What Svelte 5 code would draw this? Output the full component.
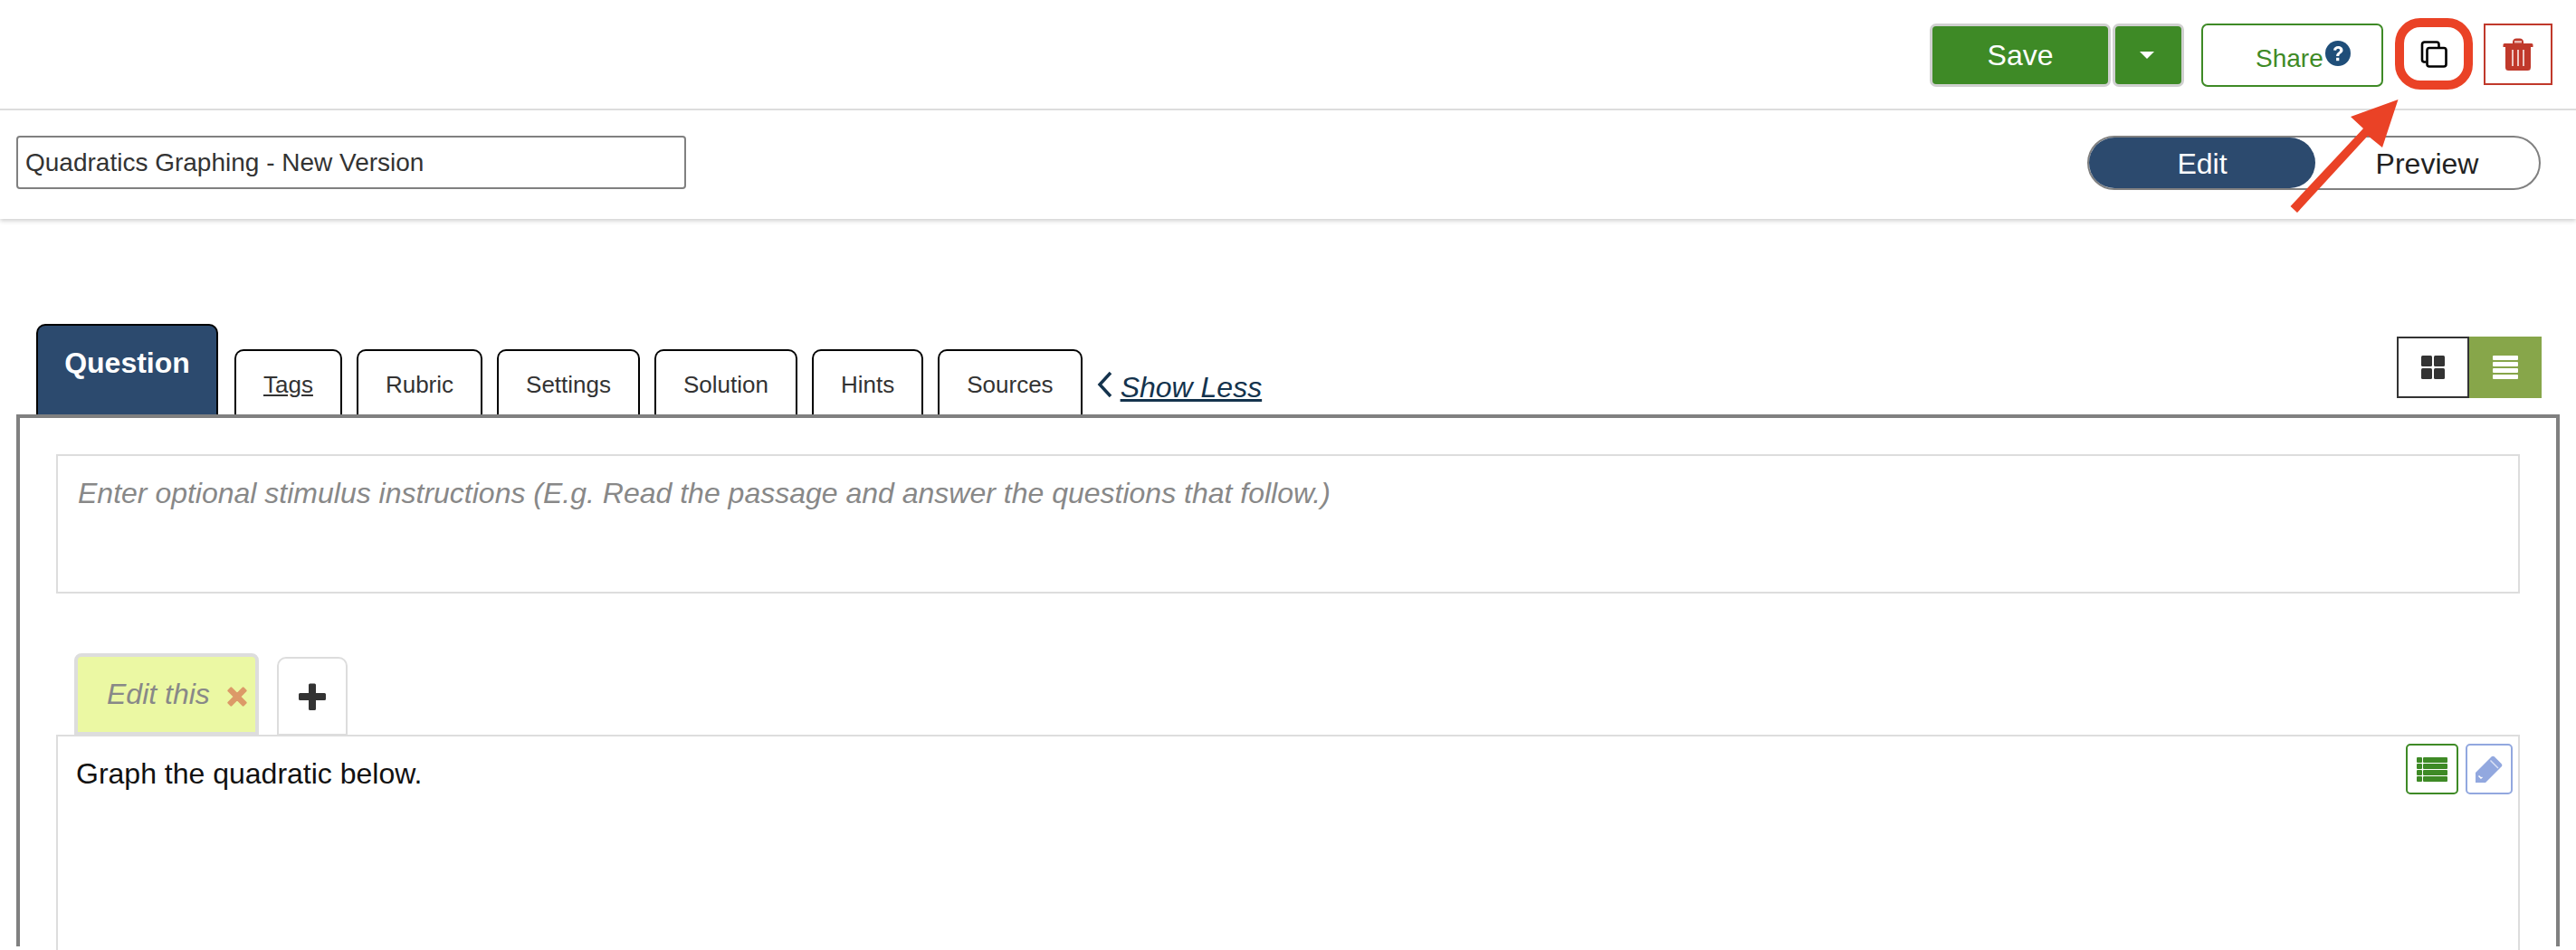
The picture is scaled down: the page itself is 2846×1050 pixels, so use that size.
<script lang="ts">
  const tabs = ['Tags', 'Rubric', 'Settings', 'Solution', 'Hints', 'Sources'];
  let title = 'Quadratics Graphing - New Version';
</script>

<div class="page">
  <header class="topbar">
    <div class="actions">
      <button class="save">Save</button>
      <button class="save-more" aria-label="More save options"><span class="caret"></span></button>
      <button class="share">
        <span>Share</span>
        <svg class="help" viewBox="0 0 28 28" aria-hidden="true">
          <circle cx="14" cy="14" r="14" fill="#1f4e79" />
          <path d="M9 10.500c.3-3 2.500-4.500 5.200-4.500 3 0 5.300 1.700 5.300 4.400 0 3.600-4.200 3.500-4.200 6.600h-3.200c0-4.300 4-4.300 4-6.500 0-1-.8-1.700-1.900-1.700-1.200 0-1.900.8-2.100 2z" fill="#fff" />
          <rect x="12.100" y="18.800" width="3.200" height="3.400" fill="#fff" />
        </svg>
      </button>
      <button class="copy" aria-label="Copy">
        <svg viewBox="0 0 30 30" width="30" height="30" aria-hidden="true">
          <path d="M6.500 23.500H4a2.500 2.500 0 0 1-2-2.500V4a2.500 2.500 0 0 1 2.500-2.500H18A2.500 2.500 0 0 1 20.500 4v3" fill="none" stroke="#000" stroke-width="2.600" />
          <rect x="7.500" y="8" width="21" height="20.500" rx="2.500" fill="#fff" stroke="#000" stroke-width="2.600" />
        </svg>
      </button>
      <button class="trash" aria-label="Delete">
        <svg viewBox="0 0 34 36" width="34" height="36" aria-hidden="true">
          <path d="M11 6V4.500C11 2 13 .5 15 .5h4c2 0 4 1.500 4 4V6h9a1.500 1.500 0 0 1 1.500 1.500V10H.5V7.500A1.500 1.500 0 0 1 2 6z" fill="#c0392b" />
          <rect x="13" y="3" width="8" height="2.500" fill="#e9b8b2" />
          <path d="M3 10h28v22.500a3.500 3.500 0 0 1-3.500 3.500h-21A3.500 3.500 0 0 1 3 32.500z" fill="#c0392b" />
          <rect x="10" y="13" width="2" height="18" fill="#eec6c1" />
          <rect x="16" y="13" width="2" height="18" fill="#eec6c1" />
          <rect x="22" y="13" width="2" height="18" fill="#eec6c1" />
        </svg>
      </button>
    </div>
    <div class="title-row">
      <input class="title" bind:value={title} />
      <div class="mode">
        <span class="mode-edit">Edit</span>
        <span class="mode-preview">Preview</span>
      </div>
    </div>
  </header>

  <div class="tab-row">
    <div class="tab active">Question</div>
    {#each tabs as tab}
      <div class="tab" class:link={tab === 'Tags'}><span>{tab}</span></div>
    {/each}
    <a class="show-less" href="#top">
      <svg viewBox="0 0 20 30" width="20" height="30" aria-hidden="true">
        <path d="M17 2 5 15l12 13" fill="none" stroke="#14334d" stroke-width="3.500" />
      </svg>
      <span>Show Less</span>
    </a>
    <div class="views">
      <button class="view grid" aria-label="Grid view">
        <svg viewBox="0 0 26 26" width="26" height="26" aria-hidden="true">
          <rect width="12" height="12" rx="1.500" fill="#333" />
          <rect x="14" width="12" height="12" rx="1.500" fill="#333" />
          <rect y="14" width="12" height="12" rx="1.500" fill="#333" />
          <rect x="14" y="14" width="12" height="12" rx="1.500" fill="#333" />
        </svg>
      </button>
      <button class="view list" aria-label="List view">
        <svg viewBox="0 0 28 26" width="28" height="26" aria-hidden="true">
          <rect width="28" height="5" rx="1" fill="#fff" />
          <rect y="7" width="28" height="5" rx="1" fill="#fff" />
          <rect y="14" width="28" height="5" rx="1" fill="#fff" />
          <rect y="21" width="28" height="5" rx="1" fill="#fff" />
        </svg>
      </button>
    </div>
  </div>

  <section class="panel">
    <div class="stimulus">Enter optional stimulus instructions (E.g. Read the passage and answer the questions that follow.)</div>

    <div class="part-tabs">
      <div class="part active">
        <em>Edit this</em>
        <svg viewBox="3 3 18 18" width="24" height="24" aria-hidden="true">
          <path d="M5 7 7 5l5 5 5-5 2 2-5 5 5 5-2 2-5-5-5 5-2-2 5-5z" fill="#dc9a68" stroke="#dc9a68" stroke-width="2" stroke-linejoin="round" />
        </svg>
      </div>
      <button class="part add" aria-label="Add part">
        <svg viewBox="0 0 30 30" width="30" height="30" aria-hidden="true">
          <path d="M11 2a1.500 1.500 0 0 1 1.500-1.500h5A1.500 1.500 0 0 1 19 2v9h9.500a1.500 1.500 0 0 1 1.500 1.500v5a1.500 1.500 0 0 1-1.500 1.500H19v9.500a1.500 1.500 0 0 1-1.500 1.500h-5a1.500 1.500 0 0 1-1.500-1.500V19H1.500A1.500 1.500 0 0 1 0 17.500v-5A1.500 1.500 0 0 1 1.500 11H11z" fill="#333" />
        </svg>
      </button>
    </div>

    <div class="body">
      <p>Graph the quadratic below.</p>
      <div class="body-tools">
        <button class="tool green" aria-label="Table">
          <svg viewBox="0 0 34 27" width="34" height="27" aria-hidden="true">
            {#each [0, 7, 14, 21] as y}
              <rect {y} width="6" height="6" rx="1" fill="#3e8a26" />
              <rect x="7" {y} width="27" height="6" rx="1" fill="#3e8a26" />
            {/each}
          </svg>
        </button>
        <button class="tool blue" aria-label="Edit">
          <svg viewBox="0 0 30 30" width="30" height="30" aria-hidden="true">
            <path d="M0 30V19L17.500 1.500a2.500 2.500 0 0 1 3.500 0l7.500 7.500a2.500 2.500 0 0 1 0 3.500L11 30z" fill="#92a8df" />
            <path d="M16.500 5.500 25 14" stroke="#dbe2f5" stroke-width="1.500" />
            <path d="M3.500 22.500 6 25l1.500-1" stroke="#fff" stroke-width="1.500" fill="none" />
          </svg>
        </button>
      </div>
    </div>
  </section>

  <svg class="arrow" viewBox="0 0 130 130" width="130" height="130" aria-hidden="true">
    <path d="M119.500 2 102 55 86 42 8 127 .5 120 81 34 67 21z" fill="#ea4226" />
  </svg>
</div>

<style>
  :global(body) {
    background: #fff;
  }

  .page {
    position: relative;
    height: 1050px;
    overflow: hidden;
    background: #fff;
    color: #333;
    font-family: "Liberation Sans", Arial, sans-serif;
  }

  button {
    font-family: inherit;
    background: #fff;
    padding: 0;
    display: flex;
    align-items: center;
    justify-content: center;
    cursor: pointer;
  }

  .topbar {
    height: 242px;
    box-sizing: border-box;
    box-shadow: 0 2px 5px rgba(0, 0, 0, 0.2);
  }

  .actions {
    height: 122px;
    box-sizing: border-box;
    padding: 26px 26px 0 0;
    display: flex;
    justify-content: flex-end;
    align-items: flex-start;
    border-bottom: 2px solid #ddd;
  }

  .save {
    width: 200px;
    height: 70px;
    background: #3e8a26;
    border: 3px solid #d0d0d0;
    border-radius: 7px;
    color: #fff;
    font-size: 32px;
  }

  .save-more {
    width: 79px;
    height: 70px;
    margin-left: 2px;
    background: #3e8a26;
    border: 3px solid #d0d0d0;
    border-radius: 7px;
  }

  .caret {
    width: 0;
    height: 0;
    margin-right: 3px;
    border-left: 8px solid transparent;
    border-right: 8px solid transparent;
    border-top: 8px solid #fff;
  }

  .share {
    width: 201px;
    height: 70px;
    margin-left: 19px;
    border: 2px solid #3e8a26;
    border-radius: 7px;
    color: #3e8a26;
    font-size: 28px;
    padding-left: 58px;
    justify-content: flex-start;
    align-items: flex-start;
  }

  .share span {
    margin-top: 21px;
  }

  .help {
    width: 28px;
    height: 28px;
    margin-top: 17px;
    margin-left: 2px;
  }

  .copy {
    position: relative;
    width: 68px;
    height: 60px;
    margin: 4px 0 0 23px;
    border: 0;
    border-right: 2px solid #000;
  }

  .copy::after {
    content: "";
    position: absolute;
    inset: -10px -10px -9px -10px;
    border: 10px solid #ea4226;
    border-radius: 28px;
  }

  .trash {
    width: 76px;
    height: 68px;
    margin-left: 20px;
    border: 2px solid #c0392b;
  }

  .title-row {
    height: 120px;
    box-sizing: border-box;
    padding: 28px 39px 0 18px;
    display: flex;
    justify-content: space-between;
    align-items: flex-start;
  }

  .title {
    width: 740px;
    height: 59px;
    box-sizing: border-box;
    padding: 0 8px;
    border: 2px solid #808080;
    border-radius: 4px;
    color: #333;
    font-family: inherit;
    font-size: 28px;
  }

  .mode {
    width: 501px;
    height: 60px;
    box-sizing: border-box;
    border: 2px solid #808080;
    border-radius: 30px;
    display: flex;
    font-size: 32px;
    line-height: 58px;
    text-align: center;
    color: #222;
  }

  .mode-edit {
    width: 250px;
    margin: 0;
    background: #2c4a6e;
    color: #fff;
    border-radius: 28px;
  }

  .mode-preview {
    flex: 1;
    padding-left: 0;
  }

  .tab-row {
    margin-top: 116px;
    height: 100px;
    padding: 0 38px 0 40px;
    display: flex;
    align-items: flex-end;
  }

  .tab {
    height: 72px;
    box-sizing: border-box;
    margin-left: 16px;
    padding: 18px 30px 0;
    border: 2px solid #000;
    border-bottom: 0;
    border-radius: 10px 10px 0 0;
    font-size: 26px;
    line-height: 38px;
    text-align: center;
  }

  .tab.active {
    width: 201px;
    height: 100px;
    margin-left: 0;
    margin-right: 2px;
    padding: 22px 0 0;
    background: #2c4a6e;
    color: #fff;
    font-size: 32px;
    font-weight: 700;
  }

  .tab.link span {
    text-decoration: underline;
  }

  .show-less {
    display: flex;
    align-items: center;
    gap: 8px;
    margin: 0 0 8px 14px;
    color: #14334d;
    font-size: 32px;
    font-style: italic;
    line-height: 44px;
  }

  .show-less svg {
    margin-bottom: 6px;
  }

  .views {
    margin-left: auto;
    margin-bottom: 18px;
    display: flex;
  }

  .view {
    width: 80px;
    height: 68px;
    box-sizing: border-box;
    border: 2px solid #333;
  }

  .view.list {
    background: #87a64a;
    border: 0;
  }

  .panel {
    margin: 0 18px;
    height: 588px;
    box-sizing: border-box;
    padding: 40px 40px 0;
    border: 4px solid #808080;
    border-bottom: 0;
  }

  .stimulus {
    height: 154px;
    box-sizing: border-box;
    padding: 21px 22px;
    border: 2px solid #ddd;
    color: #888;
    font-size: 32px;
    font-style: italic;
    line-height: 40px;
  }

  .part-tabs {
    margin: 66px 0 0 20px;
    display: flex;
    align-items: flex-end;
    gap: 20px;
  }

  .part {
    box-sizing: border-box;
    display: flex;
    align-items: center;
  }

  .part.active {
    width: 204px;
    height: 91px;
    padding: 0 0 0 32px;
    gap: 18px;
    background: #ebf8a3;
    border: 4px solid #ddd;
    border-radius: 8px 8px 0 0;
    color: #888;
    font-size: 32px;
  }

  .part.active svg {
    margin-top: 4px;
  }

  .part.add {
    width: 78px;
    height: 87px;
    border: 2px solid #ddd;
    border-radius: 10px 10px 0 0;
  }

  .body {
    position: relative;
    height: 240px;
    box-sizing: border-box;
    border: 2px solid #ddd;
    border-bottom: 0;
    margin-top: -1px;
    padding: 22px 20px;
    color: #111;
    font-size: 32px;
  }

  .body p {
    margin: 0;
    line-height: 38px;
  }

  .body-tools {
    position: absolute;
    top: 8px;
    right: 6px;
    display: flex;
    gap: 8px;
  }

  .tool {
    height: 56px;
    box-sizing: border-box;
    border-radius: 5px;
  }

  .tool.green {
    width: 58px;
    border: 2px solid #3e8a26;
  }

  .tool.blue {
    width: 52px;
    border: 2px solid #92a8df;
  }

  .arrow {
    position: absolute;
    left: 2530px;
    top: 108px;
  }
</style>
